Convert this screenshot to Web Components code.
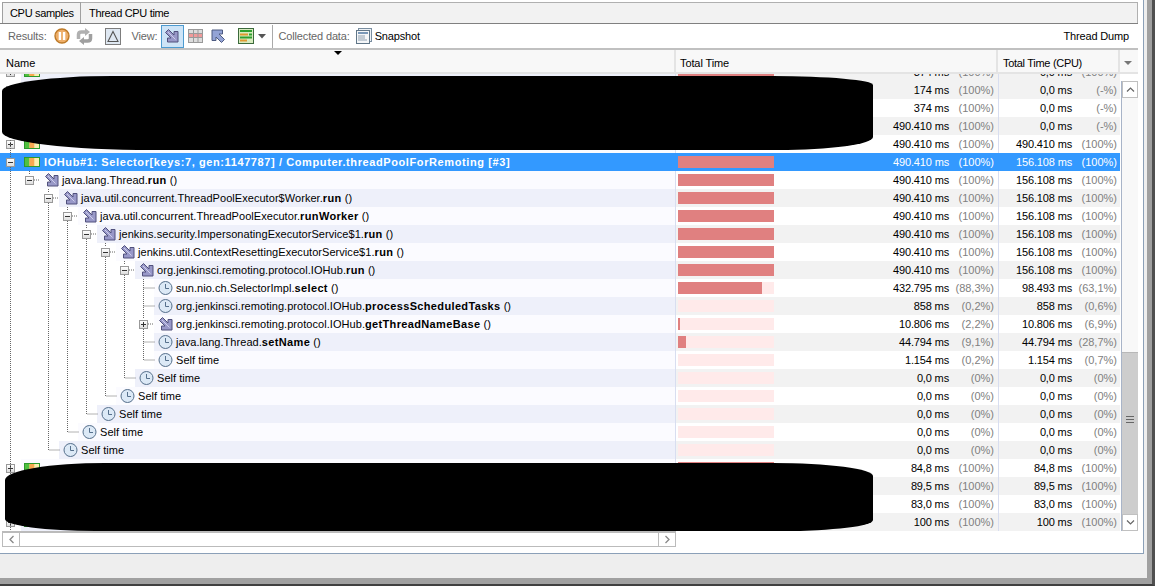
<!DOCTYPE html>
<html><head><meta charset="utf-8"><style>
html,body{margin:0;padding:0;overflow:hidden;background:#a0a0a0}
body{width:1155px;height:586px;box-sizing:border-box;border-right:3px solid #505050;border-bottom:2px solid #404040;font:11px "Liberation Sans",sans-serif;color:#000}
</style></head><body>
<app-window></app-window>
<script>
const HOTD="M1.500 4.500L4.500 1.500L10 7V3.500H14V14H3.500V10H7Z";
const ICONS={
hot:`<svg width="16" height="16" viewBox="0 0 16 16"><path d="${HOTD}" fill="#9898c8" stroke="#50507c"/><path d="M4 4L11.500 11.500" stroke="#cfcfec"/></svg>`,
clock:`<svg width="16" height="16" viewBox="0 0 16 16"><circle cx="7.500" cy="8" r="6.500" fill="#dce9f6" stroke="#56708c"/><path d="M7.500 4V8.500H11" fill="none" stroke="#56708c"/></svg>`,
thread:`<svg style="margin:0 2px 0 -1px" width="16" height="10" viewBox="0 0 16 10"><rect x=".5" y=".5" width="15" height="9" fill="#f0e8a8" stroke="#2c9a2c"/><rect x="1" y="1" width="4.500" height="8" fill="#50c040"/><rect x="5.500" y="1" width="5" height="8" fill="#f8a850"/><rect x="10.500" y="1" width="4.500" height="8" fill="#f8f0b0"/></svg>`
};
class TreeBox extends HTMLElement{constructor(){super();this.attachShadow({mode:'open'}).innerHTML=`<style>
:host{display:block;width:9px;height:9px;box-sizing:border-box;border:1px solid #999;background:linear-gradient(#fff,#ddd);position:relative;flex:none}
i{position:absolute;background:#333;left:1px;top:3px;width:5px;height:1px}
b{position:absolute;background:#333;left:3px;top:1px;width:1px;height:5px}
</style><i></i>${this.hasAttribute('plus')?'<b></b>':''}`}}
customElements.define('tree-box',TreeBox);

class TreeRow extends HTMLElement{
 connectedCallback(){
  const a=k=>this.getAttribute(k)||'';
  const lv=+a('level'),fill=+a('fill'),sel=this.hasAttribute('sel'),alt=this.hasAttribute('alt');
  const icon=ICONS[a('icon')]||'';
  const box=a('box');
  this.attachShadow({mode:'open'}).innerHTML=`<style>
  :host{display:flex;height:18px;flex:none;background:${sel?'#3399ff':alt?'#f2f2f2':'#fff'};${sel?'color:#fff;':''}line-height:18px}
  .name{width:675px;flex:none;box-sizing:border-box;height:18px;display:flex;align-items:center;background:${sel?'#3399ff':'#fff'};padding-left:${6+19*lv}px}
  .bx{width:15px;flex:none;display:flex;align-items:center}
  .lab{flex:1;min-width:0;height:18px;display:flex;align-items:center;gap:2px;padding:0 0 0 4px;box-sizing:border-box;background:${sel?'#3399ff':alt?'#eef0fa':'#fbfbff'};white-space:pre;letter-spacing:${sel?'.6px':'.05px'};${sel?'font-weight:bold;':''}}
  .lab svg{flex:none}
  ::slotted(b){font-weight:bold;letter-spacing:.35px}
  .tot{width:323px;flex:none;display:flex;align-items:center;border-left:1px solid ${sel?'#3399ff':'#d8def0'};box-sizing:border-box;padding-left:2px}
  .bar{width:96px;height:12px;background:#ffeaea;flex:none}
  .bar i{display:block;height:12px;background:#e08080;width:${fill}px}
  .v{width:175px;text-align:right;flex:none;white-space:pre;letter-spacing:-.15px}
  .p{width:46px;text-align:right;flex:none;color:${sel?'#fff':'#808080'};padding-right:1px;box-sizing:border-box;white-space:pre}
  .cpu{width:122px;flex:none;display:flex;border-left:1px solid ${sel?'#3399ff':'#d8def0'};box-sizing:border-box}
  .v2{width:73px;text-align:right;flex:none;white-space:pre;letter-spacing:-.15px}
  .p2{width:45px;text-align:right;flex:none;color:${sel?'#fff':'#808080'};white-space:pre}
  </style>
  <div class="name"><span class="bx">${box?`<tree-box ${box==='plus'?'plus':''}></tree-box>`:''}</span><span class="lab">${icon}<span><slot></slot></span></span></div>
  <div class="tot"><div class="bar"><i></i></div><div class="v">${a('t')}</div><div class="p">${a('tp')}</div></div>
  <div class="cpu"><div class="v2">${a('c')}</div><div class="p2">${a('cp')}</div></div>`;
 }
}
customElements.define('tree-row',TreeRow);

class AppWindow extends HTMLElement{constructor(){super();
const hot=ICONS.hot;
this.attachShadow({mode:'open'}).innerHTML=`<style>
:host{display:block;width:1147px;height:578px;background:#eee;font:11px "Liberation Sans",sans-serif;box-sizing:border-box;position:relative}
.panel{background:#fff;width:1144px;height:554px;border-bottom:1px solid #8ba0b8;border-right:1px solid #8ba0b8;box-sizing:border-box;display:flex;flex-direction:column;padding-top:2px;padding-right:5px}
.tabs{height:22px;flex:none;display:flex;border-bottom:1px solid #808080;box-sizing:border-box;letter-spacing:-.32px}
.tab{line-height:21px;white-space:pre;background:#f2f2f2}
.tab.on{border:1px solid #a0a0a0;border-bottom:none;width:79px;box-sizing:border-box;padding-left:7px;margin-left:2px}
.rest{flex:1;background:#f2f2f2;border-top:1px solid #b0b0b0;border-right:1px solid #b0b0b0;padding-left:8px;line-height:20px}
.tb{height:26px;flex:none;display:flex;align-items:center;border-bottom:2px solid #c0c0c0;box-sizing:border-box;padding-left:8px;white-space:pre;letter-spacing:-.15px}
.g{color:#666}
.tb svg{flex:none}
.on2{width:23px;height:23px;background:#cde4f7;border:1px solid #4d9bd0;box-sizing:border-box;display:flex;align-items:center;justify-content:center;margin-left:3px}
.sep{width:1px;height:23px;background:#aaa;margin:0 6px 0 6px}
.right{margin-left:auto;padding-right:9px}
.hdr{height:24px;flex:none;display:flex;position:relative;background:#f8f8f8;line-height:26px;border-bottom:2px solid #e4e4e4;box-sizing:border-box}
.hdr div{box-sizing:border-box;padding-left:4px;border-right:2px solid #e4e4e4;white-space:pre}
.sort{position:absolute;left:334px;top:1px;width:0;height:0;border:4px solid transparent;border-top:4px solid #000;border-bottom:none}
.corner{position:absolute;left:1124px;top:11px;width:0;height:0;border:4px solid transparent;border-top:4px solid #777;border-bottom:none}
.body{flex:none;height:457px;display:flex;position:relative;overflow:hidden}
.rows{width:1120px;flex:none;display:flex;flex-direction:column;overflow:hidden;margin-top:-11px;height:468px}
.sb{width:17px;flex:none;display:flex;flex-direction:column;background:#f8f8f8;border-left:1px solid #a8b4c8;box-sizing:border-box;margin:7px 0 0 1px;height:450px}
.btn{height:17px;flex:none;background:#fff;border:1px solid #c0c0c0;box-sizing:border-box;display:flex;align-items:center;justify-content:center}
.track{height:254px;flex:none}
.thumb{flex:1;background:#cdcdcd;display:flex;justify-content:center;align-items:flex-start;padding-top:63px;box-sizing:border-box;border-top:1px solid #b8b8b8}
.foot{height:16px;flex:none;display:flex;width:674px;margin-left:2px;background:#fff;border:1px solid #bbb;border-top:2px solid #bbb;box-sizing:border-box}
.foot .btn{width:17px;height:13px;border:none;border-right:1px solid #bbb}
.foot .btn.r{border-right:none;border-left:1px solid #bbb;margin-left:auto}
.blob{position:absolute;background:#000;z-index:3}
.b1{left:2px;top:76px;width:871px;height:74px;border-radius:110px 100px 95px 150px / 15px 9px 13px 18px}
.b2{left:5px;top:463px;width:868px;height:68px;border-radius:100px 100px 90px 90px / 17px 13px 11px 12px}
.lines{position:absolute;left:0;top:0;pointer-events:none;z-index:2}
</style>
<div class="panel">
 <div class="tabs"><div class="tab on">CPU samples</div><div class="rest">Thread CPU time</div></div>
 <div class="tb">
  <span class="g">Results:</span>
  <svg style="margin-left:7px" width="16" height="16" viewBox="0 0 16 16"><circle cx="8" cy="8" r="7" fill="#eeae68" stroke="#bd7a28" stroke-width="1.400"/><rect x="4.700" y="4" width="2.400" height="8" fill="#fff"/><rect x="8.900" y="4" width="2.400" height="8" fill="#fff"/></svg>
  <svg style="margin-left:6px" width="17" height="17" viewBox="0 0 17 17"><path d="M2.500 11V6.500Q2.500 4 5.500 4H9" fill="none" stroke="#b0b0b0" stroke-width="3.500"/><path d="M9 0L14 4L9 8Z" fill="#b0b0b0"/><path d="M14.500 6V10.500Q14.500 13 11.500 13H8" fill="none" stroke="#a0a0a0" stroke-width="3.500"/><path d="M8 9L3 13L8 17Z" fill="#a0a0a0"/></svg>
  <svg style="margin-left:12px" width="16" height="17" viewBox="0 0 16 17"><rect x=".5" y=".5" width="15" height="16" fill="#dfe8f2" stroke="#7d7d7d"/><path d="M8 3.500L13 13.500H3Z" fill="none" stroke="#555" stroke-width="1.100"/></svg>
  <span class="g" style="margin-left:11px">View:</span>
  <span class="on2">${hot}</span>
  <svg style="margin-left:4px" width="15" height="14" viewBox="0 0 15 14"><rect x=".5" y=".5" width="14" height="13" fill="#dcdcdc" stroke="#999"/><rect x="1" y="5" width="13" height="3" fill="#f09a9a"/><path d="M1 4.500H14M1 8.500H14M5.500 1V13M10 1V13" stroke="#999"/></svg>
  <svg style="margin-left:7px;transform:rotate(180deg)" width="16" height="16" viewBox="0 0 16 16"><path d="${HOTD}" fill="#93a3d6" stroke="#4d5a80"/></svg>
  <svg style="margin-left:12px" width="16" height="16" viewBox="0 0 16 16"><rect x=".5" y=".5" width="15" height="15" fill="#d8ecc0" stroke="#3c6a3c"/><path d="M2 3H14" stroke="#2fa02f" stroke-width="2"/><path d="M2 6.500H10" stroke="#e09a30" stroke-width="2"/><path d="M11 6.500H14" stroke="#2fa02f" stroke-width="2"/><path d="M2 9.500H14" stroke="#2fa02f" stroke-width="2"/><path d="M2 12.500H9" stroke="#e09a30" stroke-width="2"/></svg>
  <svg style="margin-left:4px" width="8" height="5" viewBox="0 0 8 5"><path d="M0 0H8L4 4.500Z" fill="#555"/></svg>
  <span class="sep"></span>
  <span class="g">Collected data:</span>
  <svg style="margin-left:6px" width="16" height="16" viewBox="0 0 16 16"><rect x="2.500" y=".5" width="13" height="13" fill="#eef2f6" stroke="#7a8ea0"/><rect x=".5" y="2.500" width="13" height="13" fill="#f4f6f8" stroke="#607688"/><rect x="2" y="4" width="10" height="2" fill="#7a98b8"/><path d="M2 8H9M2 10H9M2 12H11" stroke="#90a0b0"/></svg>
  <span style="margin-left:3px">Snapshot</span>
  <span class="right">Thread Dump</span>
 </div>
 <div class="hdr">
  <div style="width:676px;padding-left:6px">Name</div><div style="width:322px;letter-spacing:-.1px">Total Time</div><div style="width:122px;padding-left:5px;letter-spacing:-.3px">Total Time (CPU)</div>
  <span class="sort"></span><span class="corner"></span>
 </div>
 <div class="body">
  <div class="rows">
   <tree-row alt box="plus" icon="thread" fill="96" t="374 ms" tp="(100%)" c="0,0 ms" cp="(100%)"></tree-row>
   <tree-row alt box="plus" icon="thread" fill="96" t="174 ms" tp="(100%)" c="0,0 ms" cp="(-%)"></tree-row>
   <tree-row box="plus" icon="thread" fill="96" t="374 ms" tp="(100%)" c="0,0 ms" cp="(-%)"></tree-row>
   <tree-row alt box="plus" icon="thread" fill="96" t="490.410 ms" tp="(100%)" c="0,0 ms" cp="(-%)"></tree-row>
   <tree-row box="plus" icon="thread" fill="96" t="490.410 ms" tp="(100%)" c="490.410 ms" cp="(100%)"></tree-row>
   <tree-row sel level="0" box="minus" icon="thread" fill="96" t="490.410 ms" tp="(100%)" c="156.108 ms" cp="(100%)">IOHub#1: Selector[keys:7, gen:1147787] / Computer.threadPoolForRemoting [#3]</tree-row>
   <tree-row level="1" box="minus" icon="hot" fill="96" t="490.410 ms" tp="(100%)" c="156.108 ms" cp="(100%)">java.lang.Thread.<b>run</b> ()</tree-row>
   <tree-row alt level="2" box="minus" icon="hot" fill="96" t="490.410 ms" tp="(100%)" c="156.108 ms" cp="(100%)">java.util.concurrent.ThreadPoolExecutor$Worker.<b>run</b> ()</tree-row>
   <tree-row level="3" box="minus" icon="hot" fill="96" t="490.410 ms" tp="(100%)" c="156.108 ms" cp="(100%)">java.util.concurrent.ThreadPoolExecutor.<b>runWorker</b> ()</tree-row>
   <tree-row alt level="4" box="minus" icon="hot" fill="96" t="490.410 ms" tp="(100%)" c="156.108 ms" cp="(100%)">jenkins.security.ImpersonatingExecutorService$1.<b>run</b> ()</tree-row>
   <tree-row level="5" box="minus" icon="hot" fill="96" t="490.410 ms" tp="(100%)" c="156.108 ms" cp="(100%)">jenkins.util.ContextResettingExecutorService$1.<b>run</b> ()</tree-row>
   <tree-row alt level="6" box="minus" icon="hot" fill="96" t="490.410 ms" tp="(100%)" c="156.108 ms" cp="(100%)">org.jenkinsci.remoting.protocol.IOHub.<b>run</b> ()</tree-row>
   <tree-row level="7" icon="clock" fill="84" t="432.795 ms" tp="(88,3%)" c="98.493 ms" cp="(63,1%)">sun.nio.ch.SelectorImpl.<b>select</b> ()</tree-row>
   <tree-row alt level="7" icon="clock" fill="0" t="858 ms" tp="(0,2%)" c="858 ms" cp="(0,6%)">org.jenkinsci.remoting.protocol.IOHub.<b>processScheduledTasks</b> ()</tree-row>
   <tree-row level="7" box="plus" icon="hot" fill="2" t="10.806 ms" tp="(2,2%)" c="10.806 ms" cp="(6,9%)">org.jenkinsci.remoting.protocol.IOHub.<b>getThreadNameBase</b> ()</tree-row>
   <tree-row alt level="7" icon="clock" fill="8" t="44.794 ms" tp="(9,1%)" c="44.794 ms" cp="(28,7%)">java.lang.Thread.<b>setName</b> ()</tree-row>
   <tree-row level="7" icon="clock" fill="0" t="1.154 ms" tp="(0,2%)" c="1.154 ms" cp="(0,7%)">Self time</tree-row>
   <tree-row alt level="6" icon="clock" fill="0" t="0,0 ms" tp="(0%)" c="0,0 ms" cp="(0%)">Self time</tree-row>
   <tree-row level="5" icon="clock" fill="0" t="0,0 ms" tp="(0%)" c="0,0 ms" cp="(0%)">Self time</tree-row>
   <tree-row alt level="4" icon="clock" fill="0" t="0,0 ms" tp="(0%)" c="0,0 ms" cp="(0%)">Self time</tree-row>
   <tree-row level="3" icon="clock" fill="0" t="0,0 ms" tp="(0%)" c="0,0 ms" cp="(0%)">Self time</tree-row>
   <tree-row alt level="2" icon="clock" fill="0" t="0,0 ms" tp="(0%)" c="0,0 ms" cp="(0%)">Self time</tree-row>
   <tree-row box="plus" icon="thread" fill="96" t="84,8 ms" tp="(100%)" c="84,8 ms" cp="(100%)"></tree-row>
   <tree-row alt box="plus" icon="thread" fill="96" t="89,5 ms" tp="(100%)" c="89,5 ms" cp="(100%)"></tree-row>
   <tree-row box="plus" icon="thread" fill="96" t="83,0 ms" tp="(100%)" c="83,0 ms" cp="(100%)"></tree-row>
   <tree-row alt box="plus" icon="thread" fill="96" t="100 ms" tp="(100%)" c="100 ms" cp="(100%)"></tree-row>
  </div>
  <div class="sb">
   <div class="btn"><svg width="9" height="5" viewBox="0 0 9 5"><path d="M1 4.500L4.500 1L8 4.500" fill="none" stroke="#666" stroke-width="1.200"/></svg></div>
   <div class="track"></div>
   <div class="thumb"><svg width="8" height="7" viewBox="0 0 8 7"><path d="M0 .5H8M0 3.500H8M0 6.500H8" stroke="#666"/></svg></div>
   <div class="btn"><svg width="9" height="5" viewBox="0 0 9 5"><path d="M1 .5L4.500 4L8 .5" fill="none" stroke="#666" stroke-width="1.200"/></svg></div>
  </div>
 </div>
 <div class="foot"><div class="btn"><svg width="5" height="9" viewBox="0 0 5 9"><path d="M4.500 1L1 4.500L4.500 8" fill="none" stroke="#888" stroke-width="1.300"/></svg></div><div class="btn r"><svg width="5" height="9" viewBox="0 0 5 9"><path d="M.5 1L4 4.500L.5 8" fill="none" stroke="#888" stroke-width="1.300"/></svg></div></div>
</div>
<svg class="lines" width="676" height="540" fill="none" stroke="#666" stroke-dasharray="1 1">
 <path d="M10.500 140V157M10.500 167V531M29.500 171V175M48.500 189V193M48.500 203V450H60M67.500 207V211M67.500 221V432H79M86.500 225V229M86.500 239V414H98M105.500 243V247M105.500 257V396H117M124.500 261V265M124.500 275V378H136M143.500 279V319M143.500 329V360H155"/>
 <path d="M34 180H40M53 198H59M72 216H78M91 234H97M110 252H116M129 270H135M143.500 288H155M143.500 306H155M148 324H154M143.500 342H155"/>
</svg>
<div class="blob b1"></div><div class="blob b2"></div>`;
}}
customElements.define('app-window',AppWindow);
</script>
</body></html>
